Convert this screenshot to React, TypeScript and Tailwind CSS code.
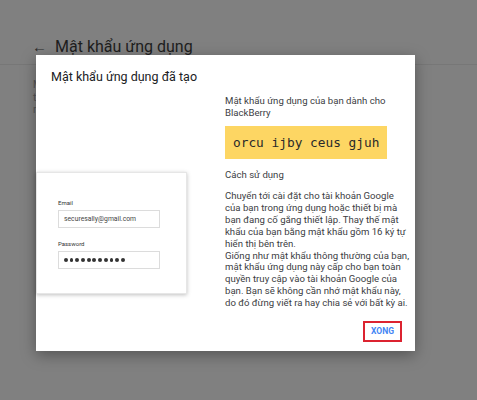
import React from "react";

const font = { fontFamily: "Roboto, 'Noto Sans', sans-serif" };

const howTo = [
  "Chuyển tới cài đặt cho tài khoản Google",
  "của bạn trong ứng dụng hoặc thiết bị mà",
  "bạn đang cố gắng thiết lập. Thay thế mật",
  "khẩu của bạn bằng mật khẩu gồm 16 ký tự",
  "hiển thị bên trên.",
  "Giống như mật khẩu thông thường của bạn,",
  "mật khẩu ứng dụng này cấp cho bạn toàn",
  "quyền truy cập vào tài khoản Google của",
  "bạn. Bạn sẽ không cần nhớ mật khẩu này,",
  "do đó đừng viết ra hay chia sẻ với bất kỳ ai.",
];

function LoginCard() {
  return (
    <div className="mt-[85px] w-[151px] h-[122px] bg-white shadow-[0_1px_4px_rgba(0,0,0,0.25)] border border-[#e6e6e6] pl-[21px] pt-[25px]">
      <div className="text-[6px] text-[#333] leading-[9px]">Email</div>
      <div className="mt-[3px] w-[102px] h-[18px] border border-[#dcdcdc] flex items-center pl-[5px] text-[6.8px] text-[#444]">
        securesally@gmail.com
      </div>
      <div className="mt-[11px] text-[6px] text-[#333] leading-[9px]">Password</div>
      <div className="mt-[3px] w-[102px] h-[18px] border border-[#dcdcdc] flex items-center pl-[5px] gap-[1.9px]">
        {Array.from({ length: 11 }).map((_, i) => (
          <span key={i} className="w-[3.8px] h-[3.8px] rounded-full bg-[#333]" />
        ))}
      </div>
    </div>
  );
}

export default function App() {
  return (
    <div className="relative w-[477px] h-[400px] overflow-hidden bg-[#808080]" style={font}>
      {/* page behind the overlay */}
      <div className="flex items-center h-[65px] border-b border-[#777] pt-[30px] pl-[32px]">
        <span className="text-[15px] text-[#2a2a2a] leading-none">←</span>
        <span className="ml-[8px] text-[16px] text-[#1e1e1e]">Mật khẩu ứng dụng</span>
      </div>
      <div className="pl-[33px] pt-[14px] text-[10px] leading-[12.5px] text-[#555]">
        <p>Mật</p>
        <p>từ</p>
        <p>những</p>
      </div>

      {/* dialog */}
      <div className="absolute left-[36px] top-[55px] w-[379px] h-[296px] bg-white shadow-[0_4px_14px_rgba(0,0,0,0.35)] flex flex-col">
        <div className="pl-[15px] pt-[12px] h-[32px] text-[12.5px] leading-[20px] text-[#202124]">
          Mật khẩu ứng dụng đã tạo
        </div>
        <div className="flex flex-1">
          <div className="w-[189px]">
            <LoginCard />
          </div>
          <div className="w-[185px] pt-[8px] text-[9.6px] leading-[12px] text-[#3c4043] whitespace-nowrap">
            <p>Mật khẩu ứng dụng của bạn dành cho</p>
            <p>BlackBerry</p>
            <div className="mt-[7px] w-[162px] h-[33px] bg-[#fdd663] flex items-center pl-[8px] text-[12.8px] text-[#2a2a2a] font-['DejaVu_Sans_Mono',monospace]">
              orcu ijby ceus gjuh
            </div>
            <p className="mt-[10px]">Cách sử dụng</p>
            <div className="mt-[9px] leading-[11.9px]">
              {howTo.map((line) => (
                <p key={line}>{line}</p>
              ))}
            </div>
          </div>
        </div>
        <div className="flex justify-end pr-[13px] pb-[9px]">
          <button className="w-[39px] h-[21px] border-2 border-[#dc2330] text-[8.5px] font-bold text-[#4285f4] flex items-center justify-center">
            XONG
          </button>
        </div>
      </div>
    </div>
  );
}
